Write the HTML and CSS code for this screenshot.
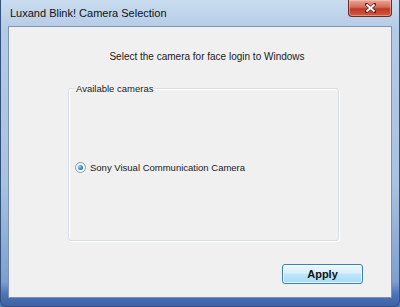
FILE: index.html
```html
<!DOCTYPE html>
<html lang="en">
<head>
    <meta charset="UTF-8">
    <meta name="viewport" content="width=device-width, initial-scale=1.0">
    <title>Luxand Blink! Camera Selection</title>
    <link rel="stylesheet" href="styles.css">
</head>
<body>
    <div class="window">
        <div class="title-bar">
            <span class="title">Luxand Blink! Camera Selection</span>
            <button class="close-btn" aria-label="Close">
                <svg width="11" height="10" viewBox="0 0 11 10">
                    <path d="M1.5 1.5 L9.5 8.5 M9.5 1.5 L1.5 8.5" stroke="#5a1a12" stroke-width="3.2" stroke-linecap="square"/>
                    <path d="M1.5 1.5 L9.5 8.5 M9.5 1.5 L1.5 8.5" stroke="#ffffff" stroke-width="2"/>
                </svg>
            </button>
        </div>

        <div class="client">
            <p class="prompt">Select the camera for face login to Windows</p>

            <fieldset class="group">
                <legend>Available cameras</legend>
                <label class="radio-row">
                    <span class="radio"><span class="radio-dot"></span></span>
                    Sony Visual Communication Camera
                </label>
            </fieldset>

            <div class="actions">
                <button class="button">Apply</button>
            </div>
        </div>
    </div>
</body>
</html>
```

FILE: styles.css
```css
/* Base Styles */
body {
    margin: 0;
    font-family: "Liberation Sans", Arial, sans-serif;
    color: #1a1a1a;
    background: #4a7db0;
}

/* Window frame */
.window {
    width: 400px;
    height: 307px;
    box-sizing: border-box;
    padding: 0 7px 8px 7px;
    border: 1px solid #35507a;
    border-top: none;
    border-radius: 0 0 6px 6px;
    background: linear-gradient(to bottom, #c9dcef 0, #b4cbe6 30px, #a9c2df 60%, #7e9fcf 92%, #4c74b8 96%, #3c62a8 100%);
    display: flex;
    flex-direction: column;
}

.title-bar {
    height: 26px;
    display: flex;
    justify-content: space-between;
    align-items: flex-start;
    flex-shrink: 0;
}

.title {
    font-size: 11px;
    color: #111;
    padding: 7px 0 0 2px;
}

.close-btn {
    width: 44px;
    height: 17px;
    margin-right: 0;
    padding: 0;
    border: 1px solid #6b2a22;
    border-top: none;
    border-radius: 0 0 4px 4px;
    background: linear-gradient(to bottom, #e9a99a 0, #d46a55 45%, #c0392b 55%, #cf5a3e 100%);
    box-shadow: inset 0 0 0 1px rgba(255, 200, 190, 0.5);
    display: flex;
    align-items: center;
    justify-content: center;
}

/* Client area */
.client {
    flex: 1;
    background: #f0f0f0;
    border: 1px solid #7f93b0;
    display: flex;
    flex-direction: column;
}

.prompt {
    margin: 24px 0 0 0;
    font-size: 10px;
    text-align: center;
    padding-left: 14px;
}

.group {
    margin: 21px 0 0 59px;
    width: 271px;
    height: 158px;
    box-sizing: border-box;
    padding: 0 0 0 6px;
    border: 1px solid #d5dfe5;
    border-radius: 3px;
    box-shadow: inset 1px 1px 0 #ffffff, 1px 1px 0 #ffffff;
}

.group legend {
    font-size: 9.5px;
    padding: 0 2px 0 1px;
    margin-left: 0;
}

.radio-row {
    display: flex;
    align-items: center;
    gap: 4px;
    font-size: 9.5px;
    margin-top: 68px;
}

.radio {
    width: 11px;
    height: 11px;
    box-sizing: border-box;
    border-radius: 50%;
    border: 1px solid #8c9aaa;
    background: linear-gradient(135deg, #e6eef5, #ffffff);
    display: flex;
    align-items: center;
    justify-content: center;
}

.radio-dot {
    width: 5px;
    height: 5px;
    border-radius: 50%;
    background: radial-gradient(circle at 35% 35%, #9ad4f2, #1f6fa8 70%, #0d4a7a);
}

.actions {
    margin-top: auto;
    display: flex;
    justify-content: flex-end;
    padding: 0 28px 13px 0;
}

.button {
    width: 81px;
    height: 20px;
    font-family: "Liberation Sans", Arial, sans-serif;
    font-size: 11px;
    font-weight: bold;
    color: #111;
    border: 1px solid #3c7fb1;
    border-radius: 3px;
    background: linear-gradient(to bottom, #eaf6fd 0, #d9f0fc 45%, #bee6fd 50%, #a7d9f5 100%);
    box-shadow: inset 0 0 0 1px rgba(255, 255, 255, 0.7);
    cursor: pointer;
}
```
